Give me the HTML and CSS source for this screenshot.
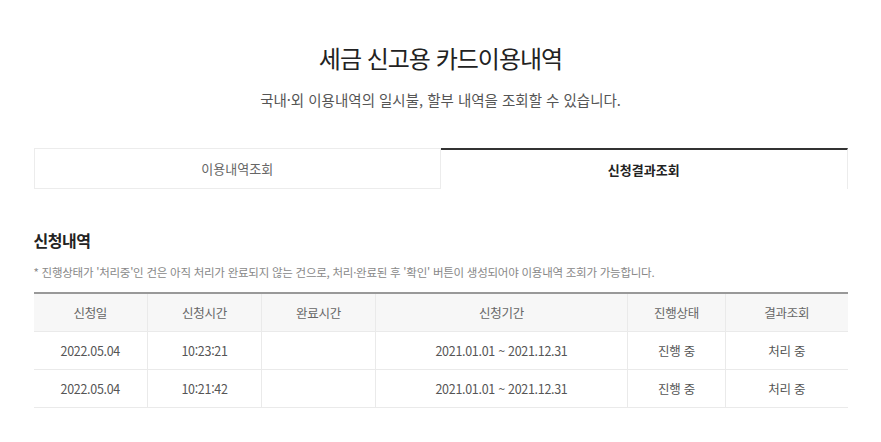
FILE: index.html
```html
<!DOCTYPE html>
<html lang="ko">
<head>
<meta charset="utf-8">
<title>세금 신고용 카드이용내역</title>
<link rel="stylesheet" href="styles.css">
</head>
<body>
<div class="page">
  <header class="intro">
    <h1 class="title">세금 신고용 카드이용내역</h1>
    <p class="desc">국내·외 이용내역의 일시불, 할부 내역을 조회할 수 있습니다.</p>
  </header>
  <nav class="tabs">
    <a class="tab">이용내역조회</a>
    <a class="tab tab-active">신청결과조회</a>
  </nav>
  <section class="history">
    <h2 class="section-title">신청내역</h2>
    <p class="note">* 진행상태가 '처리중'인 건은 아직 처리가 완료되지 않는 건으로, 처리·완료된 후 '확인' 버튼이 생성되어야 이용내역 조회가 가능합니다.</p>
    <table class="result-table">
      <colgroup>
        <col class="c-date"><col class="c-time"><col class="c-done"><col class="c-period"><col class="c-status"><col class="c-result">
      </colgroup>
      <thead>
        <tr><th>신청일</th><th>신청시간</th><th>완료시간</th><th>신청기간</th><th>진행상태</th><th>결과조회</th></tr>
      </thead>
      <tbody>
        <tr><td>2022.05.04</td><td>10:23:21</td><td></td><td>2021.01.01 ~ 2021.12.31</td><td>진행 중</td><td>처리 중</td></tr>
        <tr><td>2022.05.04</td><td>10:21:42</td><td></td><td>2021.01.01 ~ 2021.12.31</td><td>진행 중</td><td>처리 중</td></tr>
      </tbody>
    </table>
  </section>
</div>
</body>
</html>
```
FILE: styles.css
```css
* { box-sizing: border-box; }
html, body { margin: 0; padding: 0; background: #fff; }
body {
  font-family: "Noto Sans CJK KR", "Noto Sans", sans-serif;
  color: #333;
}
.page {
  width: 814px;
  margin: 0 auto;
  padding-top: 43px;
}
.intro { text-align: center; }
.title {
  margin: 0;
  font-size: 24px;
  line-height: 30px;
  font-weight: 400;
  letter-spacing: -1px;
  color: #222;
}
.desc {
  margin: 17px 0 0;
  font-size: 14.5px;
  line-height: 20px;
  letter-spacing: 0;
  color: #555;
}
.tabs {
  display: flex;
  margin-top: 38px;
}
.tab {
  flex: 1;
  height: 41px;
  display: flex;
  align-items: center;
  justify-content: center;
  font-size: 13px;
  letter-spacing: 0;
  color: #666;
  border: 1px solid #ececec;
}
.tab-active {
  border-top: 2px solid #333;
  border-bottom: 0;
  border-left: 0;
  font-weight: 700;
  color: #222;
}
.history { margin-top: 39px; }
.section-title {
  margin: 0;
  font-size: 16px;
  line-height: 24px;
  font-weight: 700;
  letter-spacing: -0.5px;
  color: #222;
}
.note {
  margin: 12px 0 0;
  font-size: 11.5px;
  line-height: 16px;
  letter-spacing: -0.25px;
  color: #888;
}
.result-table {
  width: 100%;
  margin-top: 12px;
  border-collapse: collapse;
  border-top: 2px solid #999;
  table-layout: fixed;
}
.c-date { width: 114px; }
.c-time { width: 114px; }
.c-done { width: 114px; }
.c-period { width: 252px; }
.c-status { width: 98px; }
.c-result { width: 122px; }
.result-table th,
.result-table td {
  height: 38px;
  padding: 0;
  text-align: center;
  font-size: 12.5px;
  letter-spacing: -0.3px;
  font-weight: 400;
  border-bottom: 1px solid #eaeaea;
  border-left: 1px solid #eaeaea;
}
.result-table th:first-child,
.result-table td:first-child { border-left: 0; }
.result-table th {
  background: #f7f7f7;
  color: #666;
}
.result-table td { color: #555; }
```
